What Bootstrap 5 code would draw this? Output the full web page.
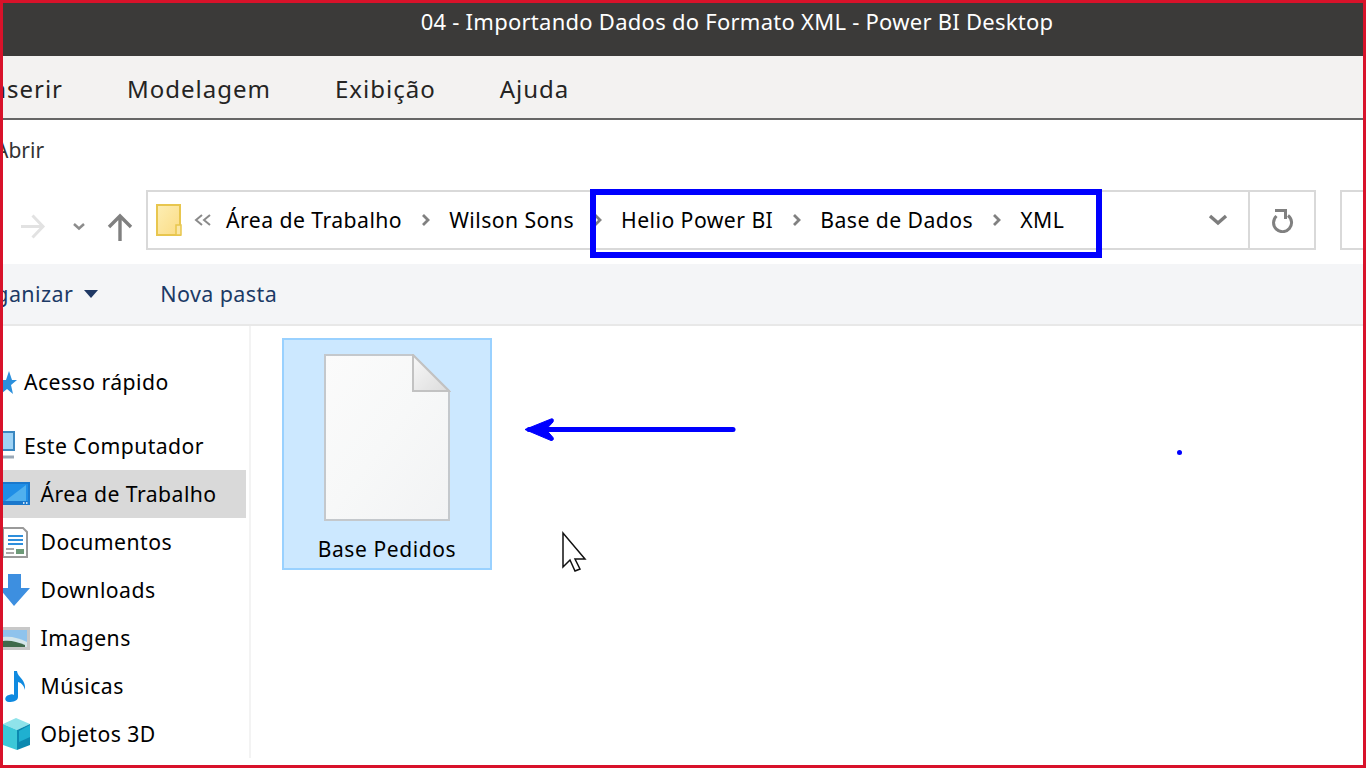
<!DOCTYPE html>
<html lang="pt-BR">
<head>
<meta charset="UTF-8">
<meta name="viewport" content="width=device-width, initial-scale=1.0">
<link href="https://cdn.jsdelivr.net/npm/bootstrap@5.3.0/dist/css/bootstrap.min.css" rel="stylesheet">
<title>04 - Importando Dados do Formato XML - Power BI Desktop</title>
<style>
html, body { height: 100%; overflow: hidden; }
body { font-family: "Noto Sans", "Liberation Sans", sans-serif; color: #111; background: #fff; }
.frame { position: relative; width: 1366px; height: 768px; border: 3px solid #d8122a; overflow: hidden; }
.title-bar { height: 53px; background: #3b3a39; color: #fff; font-size: 22px; padding: 0 0 16px 108px; letter-spacing: .26px; }
.tab-bar { height: 64px; background: #f3f2f1; border-bottom: 2px solid #666; font-size: 24px; color: #252423; letter-spacing: 1px; gap: 64px; margin-left: -21px; padding-top: 3px; }
.abrir-row { height: 70px; font-size: 21px; color: #333; padding-top: 15px; margin-left: -8px; }
.addr-row { height: 74px; }
.nav-btns { width: 143px; }
.addr-box { width: 1104px; height: 60px; border: 2px solid #d9d9d9; font-size: 21.2px; }
.chev-back { margin-left: 12px; }
.addr-path { flex: 1; gap: 19px; padding-left: 10px; letter-spacing: .45px; color: #000; }
.addr-sep { width: 9px; }
.addr-drop { margin-right: 20px; }
.refresh-cell { width: 66px; height: 60px; border: 2px solid #d9d9d9; border-left: 0; }
.search-stub { width: 40px; height: 60px; border: 2px solid #d9d9d9; border-right: 0; margin-left: 24px; }
.tool-bar { height: 62px; background: #f4f5f7; border-bottom: 2px solid #e8e8e8; font-size: 21.5px; color: #1c3a66; letter-spacing: .4px; margin-left: -34px; gap: 62px; }
.tool-item { gap: 11px; }
.side-pane { width: 248px; border-right: 2px solid #f3f3f3; font-size: 21.2px; letter-spacing: .45px; color: #000; padding-top: 32px; }
.side-row { height: 48px; padding-right: 2px; width: 243px; }
.side-row svg { flex: none; width: 27px; height: 32px; }
.side-top { margin-bottom: 16px; }
.side-row svg.side-icon-wide { width: 37.500px; }
.row-on { background: #d9d9d9; }
.side-top-label { margin-left: -6px; }
.file-pane { padding: 12px 0 0 31px; }
.file-tile { width: 210px; height: 232px; background: #cce8ff; border: 2px solid #99d1ff; padding-top: 14px; font-size: 21px; letter-spacing: .6px; color: #000; }
.file-tile span { margin-top: 12px; }
.mark-box { position: absolute; left: 587px; top: 186px; width: 512px; height: 69px; border: 6px solid #0000ff; }
.overlay-svg { position: absolute; left: 0; top: 0; pointer-events: none; }
</style>
</head>
<body>
<div class="frame">
    <div class="title-bar d-flex align-items-center justify-content-center">04 - Importando Dados do Formato XML - Power BI Desktop</div>

    <div class="tab-bar d-flex align-items-center">
        <span>Inserir</span>
        <span>Modelagem</span>
        <span>Exibição</span>
        <span>Ajuda</span>
    </div>

    <div class="abrir-row">Abrir</div>

    <div class="addr-row d-flex">
        <div class="nav-btns d-flex align-items-center flex-shrink-0">
            <svg width="143" height="60" viewBox="0 0 143 60">
                <path d="M18 29.5h21M29.5 18.5 40 29.5 29.5 40.5" fill="none" stroke="#e2e2e2" stroke-width="3"/>
                <path d="M71 27l5 4.5 5-4.5" fill="none" stroke="#8c8c8c" stroke-width="2.5"/>
                <path d="M117 44V20M106 30l11-11 11 11" fill="none" stroke="#808080" stroke-width="3.4"/>
            </svg>
        </div>
        <div class="addr-box d-flex align-items-center flex-shrink-0">
            <svg class="ms-2" width="26" height="32" viewBox="0 0 26 32">
                <defs><linearGradient id="fold" x1="0" y1="0" x2="1" y2="1"><stop offset="0" stop-color="#fdeeb4"/><stop offset="1" stop-color="#fbdc85"/></linearGradient></defs>
                <rect x="1" y="1" width="23" height="30" fill="url(#fold)" stroke="#e8c64e" stroke-width="2"/>
                <path d="M20 21h5v10h-5z" fill="#fbe7a6" stroke="#e8c64e" stroke-width="1.5"/>
            </svg>
            <svg class="chev-back" width="18" height="14" viewBox="0 0 18 14">
                <path d="M8 2 2 7l6 5M16 2l-6 5 6 5" fill="none" stroke="#8a8a8a" stroke-width="2"/>
            </svg>
            <div class="addr-path d-flex align-items-center">
                <span class="ms-1">Área de Trabalho</span>
                <svg class="addr-sep" viewBox="0 0 9 14" height="14"><path d="M2 2l5 5-5 5" fill="none" stroke="#808080" stroke-width="2.8"/></svg>
                <span>Wilson Sons</span>
                <svg class="addr-sep" viewBox="0 0 9 14" height="14"><path d="M2 2l5 5-5 5" fill="none" stroke="#808080" stroke-width="2.8"/></svg>
                <span>Helio Power BI</span>
                <svg class="addr-sep" viewBox="0 0 9 14" height="14"><path d="M2 2l5 5-5 5" fill="none" stroke="#808080" stroke-width="2.8"/></svg>
                <span>Base de Dados</span>
                <svg class="addr-sep" viewBox="0 0 9 14" height="14"><path d="M2 2l5 5-5 5" fill="none" stroke="#808080" stroke-width="2.8"/></svg>
                <span>XML</span>
            </div>
            <svg class="addr-drop" width="20" height="13" viewBox="0 0 20 13"><path d="M2 2l8 7 8-7" fill="none" stroke="#7d7d7d" stroke-width="3.4"/></svg>
        </div>
        <div class="refresh-cell d-flex align-items-center justify-content-center flex-shrink-0">
            <svg width="24" height="26" viewBox="0 0 24 26"><path d="M6.500 9A9 9 0 1 0 18 8.500" fill="none" stroke="#808080" stroke-width="3"/><path d="M5 3.500h10.500V12" fill="none" stroke="#808080" stroke-width="3"/></svg>
        </div>
        <div class="search-stub flex-shrink-0"></div>
    </div>

    <div class="tool-bar d-flex align-items-center">
        <span class="tool-item d-flex align-items-center">Organizar
            <svg width="14" height="8" viewBox="0 0 14 8"><path d="M0 0h14L7 8z" fill="#1f3864"/></svg>
        </span>
        <span>Nova pasta</span>
    </div>

    <div class="d-flex">
        <div class="side-pane flex-shrink-0">
            <div class="side-row side-top d-flex align-items-center">
                <svg viewBox="0 0 27 32"><path d="M-6 14H3L6 5l3 9h5l-6 5 2 9-6-5-6 5z" fill="#2b8fdc"/></svg>
                <span class="side-top-label">Acesso rápido</span>
            </div>
            <div class="side-row d-flex align-items-center">
                <svg viewBox="0 0 27 32"><rect x="-4" y="2" width="15" height="18" fill="#9fd3f5" stroke="#3a87c0" stroke-width="2"/><path d="M0 27h11" stroke="#9aa7b5" stroke-width="3"/></svg>
                <span class="side-top-label">Este Computador</span>
            </div>
            <div class="side-row row-on d-flex align-items-center">
                <svg class="side-icon-wide" viewBox="0 0 37.500 32"><path d="M0 4h27v23H0z" fill="#1a78cc"/><path d="M0 6h25v17H0z" fill="#1f8ee6"/><path d="M2 23 23 7v16z" fill="#4fb0ee"/><path d="M20 25h5" stroke="#fff" stroke-width="1.500" stroke-dasharray="1.500 1.500"/></svg>
                <span>Área de Trabalho</span>
            </div>
            <div class="side-row d-flex align-items-center">
                <svg class="side-icon-wide" viewBox="0 0 37.500 32"><path d="M0 2h20l4 4v25H0z" fill="#fff" stroke="#9a9a9a" stroke-width="2"/><path d="M5 10h15M5 14h15M5 18h15" stroke="#2f8fdc" stroke-width="2"/><path d="M3 23h8M3 27h8" stroke="#a8a8a8" stroke-width="2"/><path d="M13 23h8v5h-8z" fill="#6d9a78"/></svg>
                <span>Documentos</span>
            </div>
            <div class="side-row d-flex align-items-center">
                <svg class="side-icon-wide" viewBox="0 0 37.500 32"><path d="M5 0h13v14h9L11 32-4 14h9z" fill="#3d8fe0"/></svg>
                <span>Downloads</span>
            </div>
            <div class="side-row d-flex align-items-center">
                <svg class="side-icon-wide" viewBox="0 0 37.500 32"><path d="M0 5h27v23H0z" fill="#c8c8c8"/><path d="M0 8h24v17H0z" fill="#8fc3ec"/><path d="M0 15c8-1 16 1 24 5v5H0z" fill="#d5e6ea"/><path d="M0 19c8-1 14 1 22 4v2H0z" fill="#3f6a4c"/></svg>
                <span>Imagens</span>
            </div>
            <div class="side-row d-flex align-items-center">
                <svg class="side-icon-wide" viewBox="0 0 37.500 32"><path d="M11 1h3c1 7 9 8 8 19-1-4-3-7-7-8v15c0 4-5 5-9 5-5 0-5-6 0-7 2-1 4-1 5 0z" fill="#0f8ae0"/></svg>
                <span>Músicas</span>
            </div>
            <div class="side-row d-flex align-items-center">
                <svg class="side-icon-wide" viewBox="0 0 37.500 32"><path d="M0 6 13 0l14 6-13 6z" fill="#8fe3ea"/><path d="M0 6l14 6v20L0 27z" fill="#3cc8d8"/><path d="M14 12 27 6v21l-13 5z" fill="#0c89b0"/><path d="M16 13l11-6v12l-11 5z" fill="#1fb0d0"/></svg>
                <span>Objetos 3D</span>
            </div>
        </div>

        <div class="file-pane">
            <div class="file-tile d-flex flex-column align-items-center">
                <svg width="128" height="168" viewBox="0 0 128 168">
                    <defs><linearGradient id="sheet" x1="0" y1="0" x2="1" y2="1"><stop offset="0" stop-color="#fbfbfb"/><stop offset=".5" stop-color="#f7f8f8"/><stop offset="1" stop-color="#f2f3f4"/></linearGradient>
                    <linearGradient id="flap" x1="0" y1="0" x2="1" y2="1"><stop offset="0" stop-color="#f8f8f8"/><stop offset="1" stop-color="#dcdcdc"/></linearGradient></defs>
                    <path d="M2 1h88l36 36v129H2z" fill="url(#sheet)" stroke="#c4c8cc" stroke-width="2"/>
                    <path d="M90 1l36 36H90z" fill="url(#flap)" stroke="#c2c2c2" stroke-width="2"/>
                </svg>
                <span>Base Pedidos</span>
            </div>
        </div>
    </div>

    <div class="mark-box"></div>
    <svg class="overlay-svg" width="1360" height="762" viewBox="0 0 1360 762">
        <path d="M526 426.500H730" stroke="#0000ff" stroke-width="5" stroke-linecap="round" fill="none"/>
        <path d="M522 426.500 548 416c2-1 3 1 2 3l-7 7.500 7 8c1 2 0 3-2 3z" fill="#0000ff" stroke="#0000ff" stroke-width="1"/>
        <circle cx="1176.500" cy="449.500" r="2.500" fill="#0000ff"/>
        <path d="M560 530v34l7-7 5 11 5-2-5-10h10z" fill="#fff" stroke="#111" stroke-width="1.500"/>
    </svg>
</div>
</body>
</html>
